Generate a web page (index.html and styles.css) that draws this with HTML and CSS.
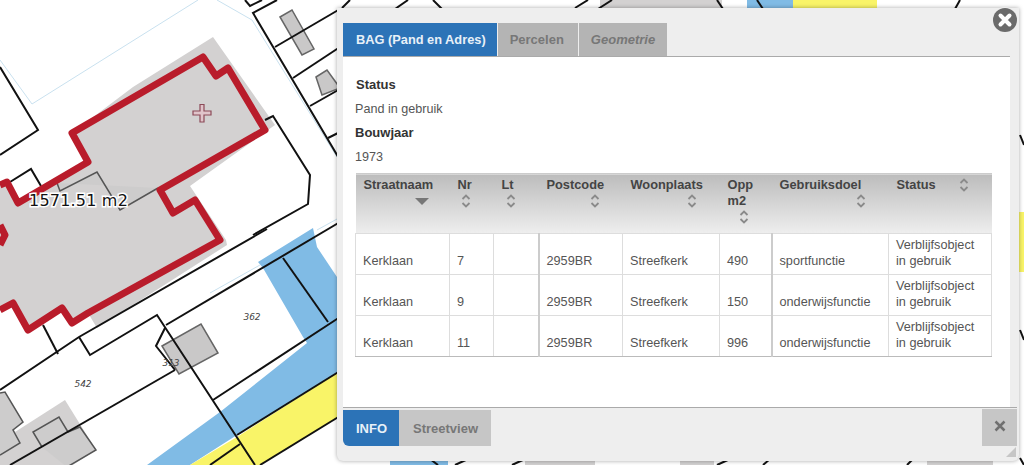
FILE: index.html
```html
<!DOCTYPE html>
<html lang="nl">
<head>
    <meta charset="UTF-8">
    <title>Kaart - BAG informatie</title>
    <link rel="stylesheet" href="styles.css">
</head>
<body>

    <svg class="map" width="1024" height="465" viewBox="0 0 1024 465">
        <!-- water en wegen -->
        <polygon class="water" points="258,262 313,228 317,247 337,277 337,373 237,435 190,465 147,465 220,412 307,343 303,337 263,268"/>
        <polygon class="road" points="337,373 337,418 260,465 190,465 237,437"/>
        <rect class="water" x="747" y="0" width="46" height="10"/>
        <rect class="road" x="793" y="0" width="84" height="10"/>
        <rect class="road" x="1018" y="212" width="6" height="60"/>
        <rect class="water" x="390" y="458" width="58" height="7"/>

        <!-- lichte lijnen -->
        <polyline class="pale" points="0,60 32,104 198,0"/>
        <polyline class="pale" points="217,0 252,20 337,157"/>
        <polyline class="pale" points="317,230 337,219"/>
        <polyline class="pale" points="210,293 260,265"/>

        <!-- geselecteerd pand -->
        <polygon class="plot" points="213,37 275,125 190,186 226,240 227,245 97,328 88,313 72,323 62,308 28,330 13,303 0,310 0,185 7,182 18,203 88,162 72,133 133,87"/>
        <polygon class="plot" points="15,432 65,400 96,450 65,470 0,470 0,400"/>
        <rect class="plot" x="600" y="0" width="122" height="10"/>
        <rect class="plot" x="525" y="458" width="70" height="7"/>
        <rect class="plot" x="680" y="458" width="34" height="7"/>
        <rect class="plot" x="927" y="458" width="66" height="7"/>

        <!-- bebouwing -->
        <polygon class="building" points="280,17 292,10 314,49 302,55"/>
        <polygon class="building" points="316,77 327,70 340,88 322,95"/>
        <polygon class="building" points="162,346 201,324 218,353 179,374"/>
        <polyline class="building-open" points="0,393 5,392 23,422 13,430 20,443 0,455"/>
        <polyline class="building-open" points="42,447 33,432 59,417 68,432 80,427 96,450 67,467"/>
        <polyline class="building-open" points="57,183 60,191 97,172 120,210 158,188"/>

        <!-- perceelgrenzen -->
        <g class="parcel">
            <polyline points="0,67 38,130 0,155"/>
            <polyline points="10,182 31,169 41,186"/>
            <polyline points="265,120 273,116 310,175 308,204 253,235"/>
            <polyline points="245,0 250,6 262,0"/>
            <polyline points="277,0 253,13 340,160"/>
            <line x1="275" y1="47" x2="340" y2="9"/>
            <line x1="293" y1="78" x2="340" y2="47"/>
            <line x1="310" y1="106" x2="340" y2="89"/>
            <line x1="328" y1="138" x2="340" y2="132"/>
            <polyline points="267,229 79,337 0,390"/>
            <polyline points="79,337 90,355 157,315 255,465"/>
            <line x1="340" y1="222" x2="166" y2="325"/>
            <polyline points="165,328 156,346 175,370"/>
            <line x1="340" y1="317" x2="213" y2="400"/>
            <line x1="175" y1="370" x2="10" y2="465"/>
            <line x1="43" y1="325" x2="58" y2="354"/>
            <line x1="283" y1="258" x2="328" y2="322"/>
            <line x1="340" y1="371" x2="237" y2="435"/>
            <line x1="240" y1="444" x2="210" y2="465"/>
            <line x1="340" y1="416" x2="260" y2="465"/>
            <line x1="350" y1="0" x2="342" y2="8"/>
            <line x1="408" y1="0" x2="395" y2="9"/>
            <line x1="433" y1="0" x2="442" y2="9"/>
            <line x1="588" y1="0" x2="575" y2="8"/>
            <line x1="612" y1="0" x2="598" y2="9"/>
            <line x1="717" y1="0" x2="723" y2="9"/>
            <line x1="757" y1="0" x2="763" y2="9"/>
            <line x1="960" y1="0" x2="955" y2="9"/>
            <line x1="1020" y1="135" x2="1024" y2="145"/>
            <line x1="1020" y1="330" x2="1024" y2="340"/>
            <line x1="1020" y1="458" x2="1024" y2="465"/>
            <line x1="430" y1="459" x2="438" y2="465"/>
            <line x1="468" y1="459" x2="455" y2="465"/>
            <line x1="525" y1="459" x2="512" y2="465"/>
            <line x1="730" y1="459" x2="717" y2="465"/>
            <line x1="770" y1="459" x2="763" y2="465"/>
            <line x1="913" y1="459" x2="907" y2="465"/>
        </g>

        <polyline class="outline" points="0,185 7,182 18,203 88,162 72,133 203,57 216,76 228,68 265,130 160,190 173,213 195,200 220,240 88,313 72,323 62,308 28,330 13,303 0,310"/>
        <polyline class="outline" points="0,225 5,235 0,245"/>

        <path class="marker" d="M200 104.500h4v6.500h7v4h-7v7h-4v-7h-7v-4h7z"/>

        <text class="plot-nr" x="83" y="387">542</text>
        <text class="plot-nr" x="252" y="320">362</text>
        <text class="plot-nr" x="171" y="366">313</text>
        <text class="measure" x="29" y="206">1571.51 m2</text>
    </svg>

    <div class="dialog">
        <button class="dialog-close" type="button" aria-label="Sluiten">
            <svg width="24" height="24" viewBox="0 0 24 24"><path d="M7.5 7.5l9 9M16.5 7.5l-9 9"/></svg>
        </button>

        <div class="tabs">
            <a class="tab active">BAG (Pand en Adres)</a>
            <a class="tab tab-percelen">Percelen</a>
            <a class="tab tab-italic">Geometrie</a>
        </div>

        <div class="content">
            <div class="field field-first">Status</div>
            <div class="value">Pand in gebruik</div>
            <div class="field">Bouwjaar</div>
            <div class="value">1973</div>

            <table class="results">
                <colgroup>
                    <col class="col-straat">
                    <col class="col-nr">
                    <col class="col-lt">
                    <col class="col-postcode">
                    <col class="col-plaats">
                    <col class="col-opp">
                    <col class="col-doel">
                    <col class="col-status">
                </colgroup>
                <thead>
                    <tr>
                        <th><div class="th-inner"><span>Straatnaam</span><svg class="sort" width="14" height="16" viewBox="0 0 14 16"><path class="sort-on" d="M0 5h14l-7 7z"/></svg></div></th>
                        <th><div class="th-inner"><span>Nr</span><svg class="sort" width="14" height="16" viewBox="0 0 14 16"><path d="M3.500 6L7 2.500 10.500 6M3.500 10L7 13.500 10.500 10"/></svg></div></th>
                        <th><div class="th-inner"><span>Lt</span><svg class="sort" width="14" height="16" viewBox="0 0 14 16"><path d="M3.500 6L7 2.500 10.500 6M3.500 10L7 13.500 10.500 10"/></svg></div></th>
                        <th><div class="th-inner"><span>Postcode</span><svg class="sort" width="14" height="16" viewBox="0 0 14 16"><path d="M3.500 6L7 2.500 10.500 6M3.500 10L7 13.500 10.500 10"/></svg></div></th>
                        <th><div class="th-inner"><span>Woonplaats</span><svg class="sort" width="14" height="16" viewBox="0 0 14 16"><path d="M3.500 6L7 2.500 10.500 6M3.500 10L7 13.500 10.500 10"/></svg></div></th>
                        <th><div class="th-inner"><span>Opp<br>m2</span><svg class="sort" width="14" height="16" viewBox="0 0 14 16"><path d="M3.500 6L7 2.500 10.500 6M3.500 10L7 13.500 10.500 10"/></svg></div></th>
                        <th><div class="th-inner"><span>Gebruiksdoel</span><svg class="sort" width="14" height="16" viewBox="0 0 14 16"><path d="M3.500 6L7 2.500 10.500 6M3.500 10L7 13.500 10.500 10"/></svg></div></th>
                        <th><div class="th-inner"><span>Status</span><svg class="sort" width="14" height="16" viewBox="0 0 14 16"><path d="M3.500 6L7 2.500 10.500 6M3.500 10L7 13.500 10.500 10"/></svg></div></th>
                    </tr>
                </thead>
                <tbody>
                    <tr>
                        <td>Kerklaan</td><td>7</td><td></td><td>2959BR</td><td>Streefkerk</td><td>490</td><td>sportfunctie</td><td>Verblijfsobject in gebruik</td>
                    </tr>
                    <tr>
                        <td>Kerklaan</td><td>9</td><td></td><td>2959BR</td><td>Streefkerk</td><td>150</td><td>onderwijsfunctie</td><td>Verblijfsobject in gebruik</td>
                    </tr>
                    <tr>
                        <td>Kerklaan</td><td>11</td><td></td><td>2959BR</td><td>Streefkerk</td><td>996</td><td>onderwijsfunctie</td><td>Verblijfsobject in gebruik</td>
                    </tr>
                </tbody>
            </table>
        </div>

        <div class="footer">
            <a class="foot-tab active">INFO</a>
            <a class="foot-tab foot-street">Streetview</a>
            <button class="foot-close" type="button" aria-label="Sluiten">
                <svg width="12" height="12" viewBox="0 0 12 12"><path d="M1.500 1.500l9 9M10.500 1.500l-9 9"/></svg>
            </button>
        </div>
        <svg class="grip" width="10" height="10" viewBox="0 0 10 10"><path d="M10 0v10H0z"/></svg>
    </div>

</body>
</html>
```

FILE: styles.css
```css
body {
    margin: 0;
    width: 1024px;
    height: 465px;
    overflow: hidden;
    background: #fff;
    font-family: "Liberation Sans", Arial, sans-serif;
    font-size: 13px;
    color: #555;
}

/* kaart */
.map {
    position: absolute;
    left: 0;
    top: 0;
}
.water { fill: #80bbe5; }
.road { fill: #f9f468; }
.plot { fill: #d3d1d1; }
.pale {
    fill: none;
    stroke: #c9e1ef;
    stroke-width: 1;
}
.building {
    fill: #c9c8c8;
    stroke: #666;
    stroke-width: 1.5;
}
.building-open {
    fill: #cdcccc;
    stroke: #555;
    stroke-width: 1.5;
}
.parcel line, .parcel polyline {
    fill: none;
    stroke: #111;
    stroke-width: 2;
}
.outline {
    fill: none;
    stroke: #b91c2b;
    stroke-width: 7;
    stroke-linejoin: round;
}
.marker {
    fill: #e0c4ca;
    stroke: #8c4a58;
    stroke-width: 1.200;
}
.plot-nr {
    font-family: "DejaVu Sans", sans-serif;
    font-size: 9px;
    font-style: italic;
    fill: #444;
    text-anchor: middle;
}
.measure {
    font-family: "DejaVu Sans", sans-serif;
    font-size: 16px;
    letter-spacing: 0.2px;
    fill: #111;
    stroke: #fff;
    stroke-width: 3px;
    paint-order: stroke;
}

/* dialoog */
.dialog {
    position: absolute;
    left: 337px;
    top: 8px;
    width: 682px;
    height: 453px;
    box-sizing: border-box;
    padding: 15px 2px 0 6px;
    display: flex;
    flex-direction: column;
    background: #eee;
    border-radius: 0 0 6px 6px;
    box-shadow: 0 0 4px rgba(0, 0, 0, 0.35);
}
.dialog-close {
    position: absolute;
    right: 2px;
    top: 0;
    width: 24px;
    height: 24px;
    padding: 0;
    border: none;
    border-radius: 50%;
    background: #6b6b6b;
    box-shadow: 0 0 0 1px #eee;
}
.dialog-close svg {
    display: block;
}
.dialog-close path {
    fill: none;
    stroke: #fff;
    stroke-width: 4;
    stroke-linecap: round;
}

.tabs {
    display: flex;
    height: 33px;
    margin-right: 7px;
    border-bottom: 1px solid #aaa;
}
.tab {
    display: flex;
    align-items: center;
    padding: 0 12px;
    margin-right: 1px;
    background: #b4b4b4;
    color: #777;
    font-weight: bold;
}
.tab.active {
    padding: 0 11px 0 13px;
    font-size: 12.8px;
    background: #2c73b7;
    color: #e8f0f8;
}
.tab-percelen {
    padding-right: 14px;
}
.tab-italic {
    font-style: italic;
    margin-right: 0;
}

.content {
    flex: 1;
    margin-right: 7px;
    padding: 16px 12px 0;
    background: #fff;
}
.field, .value {
    height: 24px;
    line-height: 24px;
}
.value {
    font-size: 12.6px;
}
.field {
    font-weight: bold;
    color: #333;
}
.field-first {
    padding-left: 1px;
}

.results {
    table-layout: fixed;
    width: 636px;
    margin-top: 4px;
    border-collapse: collapse;
    line-height: 16px;
}
.col-straat { width: 94px; }
.col-nr { width: 44px; }
.col-lt { width: 45px; }
.col-postcode { width: 84px; }
.col-plaats { width: 97px; }
.col-opp { width: 52px; }
.col-doel { width: 117px; }
.col-status { width: 103px; }

.results th {
    height: 60px;
    padding: 3px 0 0 8px;
    box-sizing: border-box;
    vertical-align: top;
    text-align: left;
    font-size: 12.8px;
    color: #444;
    background: linear-gradient(#bcbcbc, #eeeeee);
    border-top: 1px solid #ccc;
    border-bottom: 1px solid #ddd;
}
.th-inner {
    display: flex;
    flex-wrap: wrap;
    align-items: flex-start;
}
.sort {
    margin: 0 21px 0 auto;
}
.sort path {
    fill: none;
    stroke: #8a8a8a;
    stroke-width: 1.800;
}
.sort path.sort-on {
    fill: #777;
    stroke: none;
}

.results td {
    height: 41px;
    padding: 0 10px 5px 7px;
    box-sizing: border-box;
    vertical-align: bottom;
    font-size: 12.7px;
    border: 1px solid #ddd;
}
.results tbody tr:last-child td {
    border-bottom-color: #bbb;
}
.results td:nth-child(4), .results td:nth-child(7) {
    border-left: 2px solid #ccc;
}

.footer {
    display: flex;
    height: 54px;
    padding-top: 2px;
    box-sizing: border-box;
    border-top: 1px solid #aaa;
    align-items: flex-start;
}
.foot-tab {
    display: flex;
    align-items: center;
    box-sizing: border-box;
    width: 56px;
    height: 36px;
    padding-left: 13px;
    background: #c6c6c6;
    color: #777;
    font-weight: bold;
}
.foot-street {
    width: 92px;
    padding-left: 14px;
}
.foot-tab.active {
    background: #2c73b7;
    color: #e8f0f8;
    border-radius: 0 0 0 6px;
}
.foot-close {
    width: 35px;
    height: 37px;
    margin: -1px 0 0 auto;
    padding: 0;
    border: none;
    background: #c6c6c6;
}
.foot-close path {
    fill: none;
    stroke: #707070;
    stroke-width: 2.500;
}
.grip {
    position: absolute;
    right: 3px;
    bottom: 4px;
}
.grip path {
    fill: #c6c6c6;
}
```
